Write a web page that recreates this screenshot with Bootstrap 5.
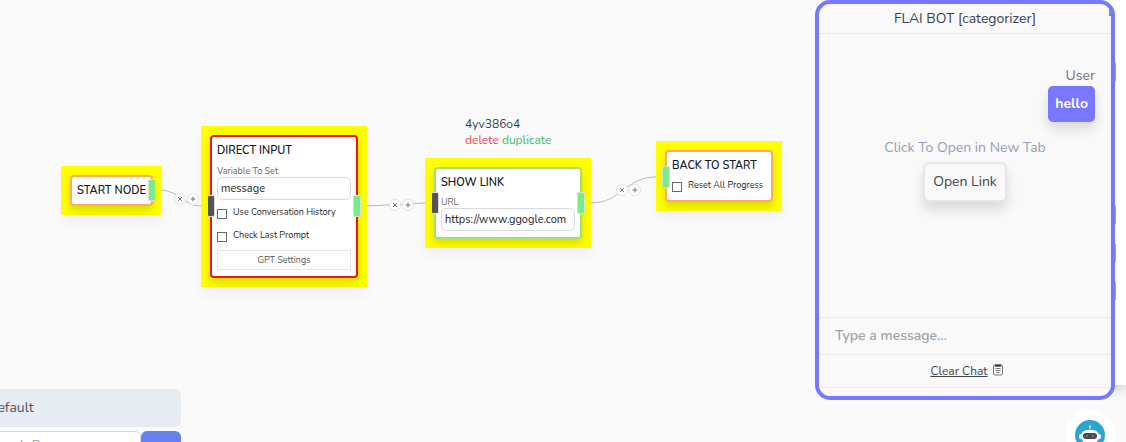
<!DOCTYPE html>
<html lang="en">
<head>
<meta charset="utf-8">
<meta name="viewport" content="width=device-width, initial-scale=1">
<title>FLAI BOT flow editor</title>
<link href="https://cdn.jsdelivr.net/npm/bootstrap@5.3.0/dist/css/bootstrap.min.css" rel="stylesheet">
<style>
  body { font-family: Nunito, Lato, "Open Sans", sans-serif; font-size: 14px; line-height: 20px; color: #374151; background: #fafafa; }
  .flow { min-height: 100vh; }
  .edges { left: 0; top: 0; width: 100%; height: 100%; pointer-events: none; }
  .edges path { fill: none; stroke: #b8b8b8; stroke-width: 1; }
  /* nodes on the free canvas */
  .node { background: #ff0; padding: 9px; box-shadow: 0 8px 12px rgba(0,0,0,.04); }
  .node-box { position: relative; background: #fff; border: 2px solid #ffa770; border-radius: 4px; padding: 6px 5px; box-shadow: 0 5px 9px rgba(0,0,0,.14); font-size: 9px; line-height: 12px; }
  .node-active { border-color: #f2101c; }
  .node-link { border-color: #9fdf7c; }
  .node-title { font-size: 11px; line-height: 14px; font-weight: 600; color: #111827; margin: 0; padding-top: 1px; white-space: nowrap; }
  .node-title + * { margin-top: 6px; }
  .node-active .node-title { margin-bottom: 7px; }
  .node-active .field-label { margin-top: 0; }
  .node-box .form-control { font-size: 11px; line-height: 14px; padding: 3px; border-color: #d9dae3; border-radius: 5px; color: #222; height: 23px; }
  .node-box label { color: #26282c; white-space: nowrap; }
  .node-box .field-label { display: block; color: #666; }
  .check-row { display: flex; gap: 6px; }
  .form-control + .check-row { margin-top: 6px; }
  .check-row + .check-row { margin-top: 10px; }
  .tick { appearance: none; width: 10px; height: 10px; border: 1px solid #6b6b6b; background: #fff; margin: 3px 0 0; flex: none; }
  .tick:checked { background: #555; }
  .btn-node { font-size: 9px; line-height: 12px; padding: 3px; border: 1px solid #e3e3e6; border-radius: 0; color: #555; }
  .port { position: absolute; width: 8px; height: 22px; border: 1px solid #ddd; border-radius: 2px; background: #78ec87; }
  .port-in { left: -5px; }
  .port-out { right: -5px; }
  .port-dark { background: #555; }
  .edge-tools { gap: 1px; }
  .edge-tools button { width: 12px; height: 12px; padding: 0; border: 1px solid #e2e2e2; border-radius: 50%; background: #fff; display: flex; align-items: center; justify-content: center; }
  .edge-tools svg { width: 6px; height: 6px; stroke: #777; fill: none; }
  .node-actions { font-size: 12px; line-height: 16px; }
  .node-actions a { text-decoration: none; }
  .del { color: #ef4444; } .dup { color: #3dbb66; }
  /* prompt library */
  .library { left: -25px; bottom: -19px; width: 206px; }
  .library-set { background: #e7ecf2; border: 0; border-radius: 6px; padding: 9px 12px; font-size: 14px; line-height: 20px; width: 100%; color: #555; appearance: none; }
  .library-search { border: 1px solid #d5d8dd; border-radius: 6px; padding: 5px 9px; font-size: 14px; line-height: 16px; min-width: 0; background: #fff; flex: 1; }
  .library-search::placeholder, .compose::placeholder { color: #9ca3af; opacity: 1; }
  .library-go { width: 40px; height: 30px; border: 0; border-radius: 6px; background: #6780f0; }
  /* chat */
  .sidebar-edge { right: 0; top: 0; width: 36px; height: 385px; background: #fff; box-shadow: 0 4px 10px rgba(100,110,140,.3); gap: 16px; padding-top: 61px; }
  .sidebar-edge i { width: 26px; height: 22px; border-radius: 4px; background: #a5a5ad; }
  .sidebar-edge i:first-child { margin-bottom: 105px; }
  .chat { right: 11px; top: 0; width: 300px; border: 4px solid #7777ff; border-radius: 15px; background: #f9f9f9; overflow: hidden; }
  .chat-head { padding: 5px 0 4px; border-bottom: 1px solid #ebebeb; position: relative; }
  .chat-head::after { content: ""; position: absolute; right: 0; top: 4px; width: 2px; height: 8px; background: #7777ff; }
  .chat-log { height: 283px; padding: 32px 16px 0; }
  .bubble { background: #7777ff; color: #fff; font-weight: 700; border-radius: 5px; padding: 8px 7px; box-shadow: 0 7px 12px rgba(0,0,0,.13); }
  .hint { color: #969cb5; margin-top: 16px; }
  .btn-open { font-size: 14px; line-height: 20px; color: #444; background: #f9f9f9; border: 2px solid #e5e5eb; border-radius: 6px; padding: 8px; margin-top: 4px; box-shadow: 0 8px 12px rgba(0,0,0,.12); }
  .compose { border: 0; border-top: 1px solid #ebebeb; background: transparent; padding: 7px 16px 9px; line-height: 20px; width: 100%; height: 37px; font-weight: 600; }
  .chat-foot { border-top: 1px solid #ebebeb; border-bottom: 1px solid #ebebeb; height: 34px; padding-left: 4px; margin-bottom: 8px; font-size: 12px; }
  .chat-foot a { color: #444; }
  .bot { right: 11px; top: 410px; width: 50px; height: 50px; border: 0; border-radius: 50%; background: #fff; padding: 10px; }
</style>
</head>
<body class="overflow-hidden">
<main class="flow position-relative overflow-hidden">
  <svg class="edges position-absolute" aria-hidden="true">
    <path d="M162 190C178 191 184 206 201 206"/>
    <path d="M367 206L425 203"/>
    <path d="M591 203C621 203 626 177 656 177"/>
  </svg>

  <section class="node position-absolute" style="left:61px;top:166px;width:101px">
    <div class="node-box"><h2 class="node-title">START NODE</h2><span class="port port-out m-0" style="top:2px"></span></div>
  </section>

  <section class="node position-absolute" style="left:201px;top:126px;width:166px">
    <div class="node-box node-active">
      <h2 class="node-title">DIRECT INPUT</h2>
      <label class="field-label" for="variable">Variable To Set</label>
      <input class="form-control" id="variable" value="message">
      <div class="check-row"><input class="tick" type="checkbox" id="history"><label for="history">Use Conversation History</label></div>
      <div class="check-row"><input class="tick" type="checkbox" id="last"><label for="last">Check Last Prompt</label></div>
      <button class="btn btn-node w-100 mt-2" type="button">GPT Settings</button>
      <span class="port port-in port-dark" style="top:58px"></span><span class="port port-out" style="top:58px"></span>
    </div>
  </section>

  <div class="node-actions position-absolute" style="left:465px;top:116px">
    <div>4yv386o4</div>
    <a class="del" href="#">delete</a> <a class="dup" href="#">duplicate</a>
  </div>
  <section class="node position-absolute" style="left:425px;top:158px;width:166px">
    <div class="node-box node-link">
      <h2 class="node-title">SHOW LINK</h2>
      <label class="field-label" for="url">URL</label>
      <input class="form-control" id="url" value="https://www.ggogle.com">
      <span class="port port-in port-dark" style="top:23px"></span><span class="port port-out" style="top:23px"></span>
    </div>
  </section>

  <section class="node position-absolute" style="left:656px;top:141px;width:126px">
    <div class="node-box pb-2">
      <h2 class="node-title">BACK TO START</h2>
      <div class="check-row"><input class="tick" type="checkbox" id="reset"><label for="reset">Reset All Progress</label></div>
      <span class="port port-in" style="top:14px"></span>
    </div>
  </section>

  <div class="edge-tools d-flex position-absolute" style="left:174px;top:193px">
    <button type="button" aria-label="Remove link"><svg viewBox="0 0 6 6"><path d="M1 1l4 4M5 1l-4 4"/></svg></button>
    <button type="button" aria-label="Add node"><svg viewBox="0 0 6 6"><path d="M3 .5v5M.5 3h5"/></svg></button>
  </div>
  <div class="edge-tools d-flex position-absolute" style="left:389px;top:199px">
    <button type="button" aria-label="Remove link"><svg viewBox="0 0 6 6"><path d="M1 1l4 4M5 1l-4 4"/></svg></button>
    <button type="button" aria-label="Add node"><svg viewBox="0 0 6 6"><path d="M3 .5v5M.5 3h5"/></svg></button>
  </div>
  <div class="edge-tools d-flex position-absolute" style="left:616px;top:184px">
    <button type="button" aria-label="Remove link"><svg viewBox="0 0 6 6"><path d="M1 1l4 4M5 1l-4 4"/></svg></button>
    <button type="button" aria-label="Add node"><svg viewBox="0 0 6 6"><path d="M3 .5v5M.5 3h5"/></svg></button>
  </div>

  <div class="library position-absolute">
    <select class="library-set d-block mb-1" aria-label="Prompt set"><option>Default</option></select>
    <div class="d-flex"><input class="library-search" placeholder="Search Persona" aria-label="Search"><button class="library-go" type="button" aria-label="Go"></button></div>
  </div>

  <div class="sidebar-edge position-absolute d-flex flex-column align-items-start"><i></i><i></i><i></i><i></i></div>

  <aside class="chat position-absolute">
    <div class="chat-head text-center">FLAI BOT [categorizer]</div>
    <div class="chat-log">
      <div class="d-flex flex-column align-items-end"><span class="text-secondary">User</span><div class="bubble">hello</div></div>
      <div class="text-center"><div class="hint">Click To Open in New Tab</div><button class="btn btn-open" type="button">Open Link</button></div>
    </div>
    <input class="compose d-block" placeholder="Type a message..." aria-label="Message">
    <div class="chat-foot d-flex justify-content-center align-items-center gap-1"><a href="#">Clear Chat</a>
      <svg class="mb-1" width="12" height="13" viewBox="0 0 12 13" fill="none" stroke="#777" aria-hidden="true"><rect x="1.500" y="2" width="9" height="10" rx="1.500"/><path d="M3 1.500h6v2H3z" fill="#333"/><path d="M3.500 5.500h5M3.500 7.500h5M4.500 9.500h3"/></svg>
    </div>
  </aside>

  <button class="bot position-absolute" type="button" aria-label="Assistant">
    <svg class="d-block" width="30" height="30" viewBox="0 0 30 30" aria-hidden="true"><circle cx="15" cy="15" r="15" fill="#2aa5d3"/><circle cx="15" cy="6.500" r="1" fill="#fff"/><path d="M15 7v4" stroke="#b8e2f2"/><rect x="6" y="10" width="18" height="13" rx="6" fill="#fff"/><rect x="4" y="14" width="22" height="5" rx="2" fill="#fff"/><rect x="8" y="13" width="14" height="6" rx="3" fill="#4a4a4a"/><circle cx="12" cy="16" r="1" fill="#2aa5d3"/><circle cx="18" cy="16" r="1" fill="#2aa5d3"/></svg>
  </button>
</main>
<script src="https://cdn.jsdelivr.net/npm/bootstrap@5.3.0/dist/js/bootstrap.bundle.min.js"></script>
</body>
</html>
